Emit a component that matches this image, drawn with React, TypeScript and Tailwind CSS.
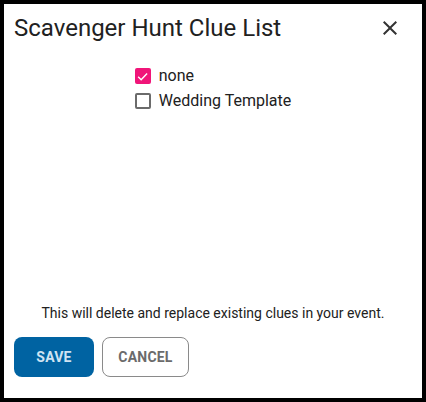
import React from "react";

export default function App() {
  return (
    <div
      className="w-[426px] h-[402px] border-4 border-black bg-white flex flex-col text-[#212121]"
      style={{ fontFamily: "Roboto, 'Liberation Sans', sans-serif" }}
    >
      <div className="flex items-center justify-between pl-[10px] pr-[20px] pt-[9px]">
        <h1 className="text-[24px] leading-[30px] font-normal text-[#212121]">Scavenger Hunt Clue List</h1>
        <button className="w-[24px] h-[24px] flex items-center justify-center text-[#333]">
          <svg width="24" height="24" viewBox="0 0 24 24">
            <path
              d="M19 6.41 17.59 5 12 10.59 6.41 5 5 6.41 10.59 12 5 17.59 6.41 19 12 13.41 17.59 19 19 17.59 13.41 12z"
              fill="currentColor"
            />
          </svg>
        </button>
      </div>
      <div className="flex justify-center pt-[21px]">
        <div className="flex flex-col gap-[1px]">
          <label className="flex items-center gap-[8px] h-[24px]">
            <span className="w-[16px] h-[16px] rounded-[2px] bg-[#f01579] flex items-center justify-center">
              <svg width="13" height="13" viewBox="0 0 24 24">
                <path d="M4 12.5 9.5 18 20.5 6.5" fill="none" stroke="white" strokeWidth="2.6" />
              </svg>
            </span>
            <span className="text-[16px] text-[#212121]">none</span>
          </label>
          <label className="flex items-center gap-[8px] h-[24px]">
            <span className="w-[16px] h-[16px] rounded-[2px] border-2 border-[#6b6b6b] bg-white" />
            <span className="text-[16px] text-[#212121]">Wedding Template</span>
          </label>
        </div>
      </div>
      <div className="flex-1" />
      <p className="text-center text-[14px] leading-[20px] text-[#212121] pb-[14px]">
        This will delete and replace existing clues in your event.
      </p>
      <div className="flex gap-[8px] pl-[10px] pb-[21px]">
        <button className="w-[80px] h-[40px] rounded-[8px] bg-[#0063a2] text-[#cfe3f2] text-[14px] font-bold tracking-[0.2px]">
          SAVE
        </button>
        <button className="w-[87px] h-[40px] rounded-[8px] border border-[#8a8a8a] bg-white text-[#6b6b6b] text-[14px] font-bold tracking-[0.2px]">
          CANCEL
        </button>
      </div>
    </div>
  );
}
